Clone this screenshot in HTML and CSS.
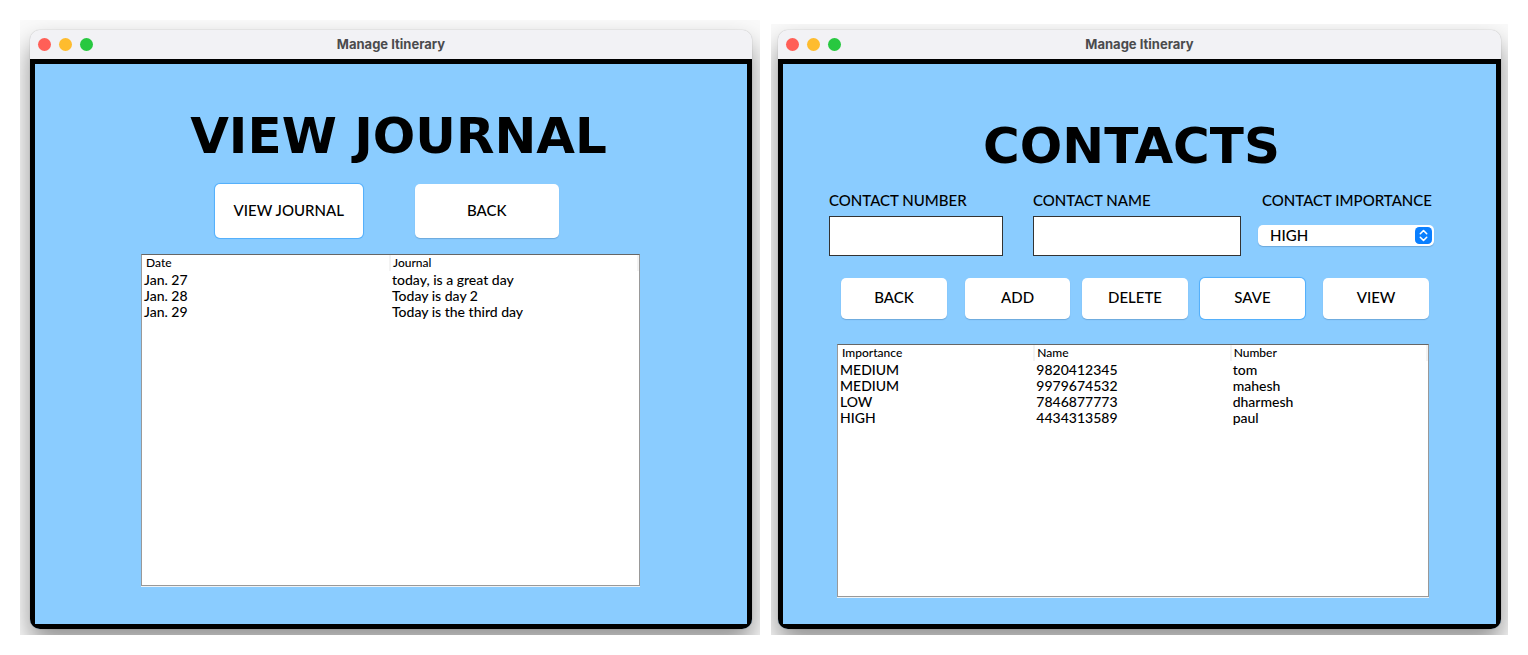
FILE: index.html
```html
<!DOCTYPE html>
<html lang="en">
<head>
<meta charset="utf-8">
<title>Manage Itinerary</title>
<link rel="stylesheet" href="styles.css">
</head>
<body>
<main class="desktop">
  <section class="backdrop">
    <div class="window">
      <header class="titlebar">
        <div class="lights"><span class="light close"></span><span class="light minimize"></span><span class="light expand"></span></div>
        <div class="window-title">Manage Itinerary</div>
      </header>
      <div class="content journal">
        <h1 class="heading">VIEW JOURNAL</h1>
        <div class="journal-actions">
          <button class="button focused" type="button">VIEW JOURNAL</button>
          <button class="button" type="button">BACK</button>
        </div>
        <div class="table-box">
          <table class="table">
            <thead><tr><th>Date</th><th>Journal</th></tr></thead>
            <tbody>
              <tr><td>Jan. 27</td><td>today, is a great day</td></tr>
              <tr><td>Jan. 28</td><td>Today is day 2</td></tr>
              <tr><td>Jan. 29</td><td>Today is the third day</td></tr>
            </tbody>
          </table>
        </div>
      </div>
    </div>
  </section>
  <section class="backdrop second">
    <div class="window">
      <header class="titlebar">
        <div class="lights"><span class="light close"></span><span class="light minimize"></span><span class="light expand"></span></div>
        <div class="window-title">Manage Itinerary</div>
      </header>
      <div class="content contacts">
        <h1 class="heading">CONTACTS</h1>
        <form class="fields">
          <div class="field number">
            <label for="number">CONTACT NUMBER</label>
            <input class="text-box" id="number" type="text">
          </div>
          <div class="field name">
            <label for="name">CONTACT NAME</label>
            <input class="text-box" id="name" type="text">
          </div>
          <div class="field importance">
            <label for="importance">CONTACT IMPORTANCE</label>
            <div class="select-box">
              <select class="select" id="importance"><option>HIGH</option><option>MEDIUM</option><option>LOW</option></select>
              <svg class="stepper" viewBox="0 0 16 16" aria-hidden="true"><rect width="16" height="16" rx="4"/><path d="M5 6.300L8 3.300L11 6.300M5 9.700L8 12.700L11 9.700"/></svg>
            </div>
          </div>
        </form>
        <div class="contact-actions">
          <button class="button" type="button">BACK</button>
          <div class="button-group">
            <button class="button" type="button">ADD</button>
            <button class="button" type="button">DELETE</button>
            <button class="button focused" type="button">SAVE</button>
          </div>
          <button class="button" type="button">VIEW</button>
        </div>
        <div class="table-box">
          <table class="table">
            <thead><tr><th>Importance</th><th>Name</th><th>Number</th></tr></thead>
            <tbody>
              <tr><td>MEDIUM</td><td>9820412345</td><td>tom</td></tr>
              <tr><td>MEDIUM</td><td>9979674532</td><td>mahesh</td></tr>
              <tr><td>LOW</td><td>7846877773</td><td>dharmesh</td></tr>
              <tr><td>HIGH</td><td>4434313589</td><td>paul</td></tr>
            </tbody>
          </table>
        </div>
      </div>
    </div>
  </section>
</main>
</body>
</html>
```
FILE: styles.css
```css
* { box-sizing: border-box; }

body {
  margin: 0;
  background: #fff;
  color: #000;
  font-family: Lato, "Open Sans", sans-serif;
  font-size: 15px;
}

.desktop {
  display: grid;
  grid-template-columns: 740fr 737fr;
  gap: 11px;
  min-height: 100vh;
  padding: 20px;
}

.backdrop {
  display: flex;
  padding: 10px 8px 6px 10px;
  overflow: hidden;
  background: #fafafa;
}

.backdrop.second {
  margin-top: 4px;
  padding: 6px 7px;
}

.window {
  display: flex;
  flex: 1;
  flex-direction: column;
  min-width: 0;
  overflow: hidden;
  border-radius: 10px;
  background: #f2f2f5;
  box-shadow: 0 0 1px rgba(0, 0, 0, 0.4), 0 14px 26px rgba(0, 0, 0, 0.42);
}

.titlebar {
  display: grid;
  grid-template-columns: 1fr auto 1fr;
  align-items: center;
  height: 29px;
  padding: 0 8px;
  background: #f2f2f5;
}

.lights {
  display: flex;
  gap: 8px;
}

.light {
  width: 13px;
  height: 13px;
  border-radius: 50%;
}

.close { background: #ff5f57; }
.minimize { background: #febc2e; }
.expand { background: #28c840; }

.window-title {
  padding-bottom: 2px;
  color: #4b4b4d;
  font: 700 13px/16px Inter, sans-serif;
}

.content {
  display: flex;
  flex: 1;
  flex-direction: column;
  border: 5px solid #000;
  background: #8accff;
}

.heading {
  margin: 0;
  font-family: "DejaVu Sans", sans-serif;
  font-size: 50px;
  font-weight: 700;
  line-height: 58px;
  text-align: center;
  white-space: nowrap;
}

.button {
  height: 100%;
  padding: 0 0 3px;
  border: 0;
  border-radius: 5px;
  background: #fff;
  box-shadow: 0 1px 1px rgba(0, 40, 90, 0.22);
  color: #000;
  font: 500 15px/18px Lato, sans-serif;
}

.focused {
  box-shadow: 0 0 0 1px #55b0fb, 0 0 2px #55b0fb;
}

.table-box {
  flex: 1;
  border: 1px solid #999;
  border-top-color: #666;
  background: #fff;
  box-shadow: 0 1px 0 #eef3f7;
}

.table {
  width: 100%;
  border-collapse: collapse;
  table-layout: fixed;
}

.table th {
  height: 16px;
  padding: 0 4px;
  border-right: 2px solid #f3f3f3;
  font-size: 12px;
  font-weight: 500;
  line-height: 16px;
  text-align: left;
}

.table th + th { padding-left: 2px; }

.table td {
  height: 16px;
  padding: 0 2px;
  font-size: 14px;
  font-weight: 500;
  line-height: 16px;
}

.table tbody tr:first-child td {
  height: 17px;
  padding-top: 1px;
}

.journal { padding: 43px 107px 38px 106px; }

.journal .heading { padding-left: 16px; }

.journal-actions {
  display: grid;
  grid-template-columns: 147fr 144fr;
  gap: 52px;
  height: 54px;
  margin: 19px 81px 16px 74px;
}

.contacts { padding: 53px 62px 27px 46px; }

.fields {
  display: flex;
  margin-top: 17px;
}

.field { min-width: 0; }

.field label {
  display: block;
  margin-bottom: 7px;
  font-weight: 500;
  line-height: 17px;
  white-space: nowrap;
}

.number { flex: 174; }

.name {
  flex: 208;
  margin-left: 30px;
}

.importance {
  flex: 176;
  margin-left: 17px;
}

.importance label { padding-left: 4px; }

.text-box {
  display: block;
  width: 100%;
  height: 40px;
  padding: 0 8px;
  border: 1px solid #333;
  background: #fff;
  font: 15px/18px Lato, sans-serif;
}

.select-box {
  display: grid;
  margin-top: 16px;
}

.select {
  grid-area: 1 / 1;
  height: 21px;
  padding: 0 24px 0 12px;
  border: 0;
  border-radius: 5px;
  appearance: none;
  background: #fff;
  box-shadow: 0 1px 1px rgba(0, 40, 90, 0.22);
  color: #000;
  font: 500 15px/19px Lato, sans-serif;
}

.stepper {
  grid-area: 1 / 1;
  align-self: center;
  justify-self: end;
  width: 17px;
  height: 17px;
  margin-right: 2px;
  fill: #0a7fff;
  pointer-events: none;
}

.stepper path {
  fill: none;
  stroke: #fff;
  stroke-width: 1.500;
  stroke-linecap: round;
  stroke-linejoin: round;
}

.contact-actions {
  display: grid;
  grid-template-columns: 106fr 341fr 106fr;
  gap: 18px;
  height: 41px;
  margin: 22px 5px 25px 12px;
}

.button-group {
  display: grid;
  grid-template-columns: repeat(3, 1fr);
  gap: 12px;
}

.contacts .table-box { margin: 0 5px 0 8px; }
```
